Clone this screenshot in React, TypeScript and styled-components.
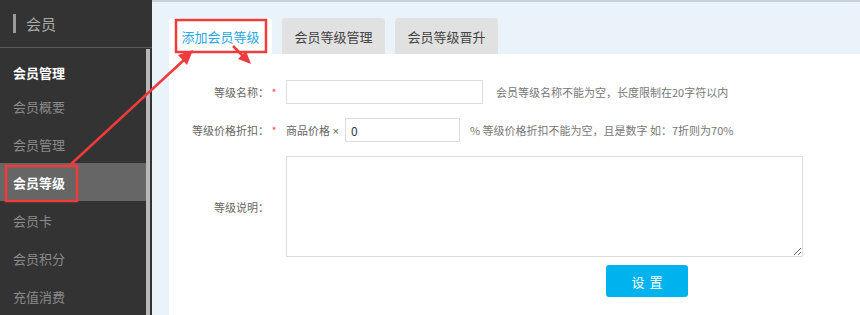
import styled, { createGlobalStyle } from 'styled-components';

const GlobalStyle = createGlobalStyle`
  html, body {
    margin: 0;
    padding: 0;
    background: #eaf3fa;
    font-family: "Noto Sans CJK SC", "Noto Sans", sans-serif;
    overflow: hidden;
  }
  * { box-sizing: border-box; }
`;

const menu = ['会员概要', '会员管理', '会员等级', '会员卡', '会员积分', '充值消费'];
const tabs = ['添加会员等级', '会员等级管理', '会员等级晋升'];

const Annotations = () => (
  <Overlay width="860" height="315" viewBox="0 0 860 315">
    <g stroke="#ef3b3b" strokeWidth="2.5" fill="none">
      <rect x="6" y="166" width="71" height="35" />
      <rect x="176" y="20" width="90" height="32" />
      <line x1="70" y1="165" x2="185" y2="59" strokeWidth="2.5" />
      <line x1="233" y1="46" x2="244" y2="57" strokeWidth="2.5" />
    </g>
    <g fill="#ef3b3b">
      <polygon points="193,50 187,65 178,55" />
      <polygon points="251,64 238,59 246,51" />
    </g>
  </Overlay>
);

const App = () => {
  return (
    <Page>
      <GlobalStyle />
      <Sidebar>
        <SideHeader>
          <span className="bar" />
          会员
        </SideHeader>
        <SideBody>
          <MenuList>
            <MenuTitle>会员管理</MenuTitle>
            {menu.map((item) => (
              <MenuItem key={item} $active={item === '会员等级'}>
                {item}
              </MenuItem>
            ))}
          </MenuList>
          <ScrollTrack />
        </SideBody>
      </Sidebar>

      <Main>
        <Tabs>
          {tabs.map((t, i) => (
            <Tab key={t} $active={i === 0}>
              {t}
            </Tab>
          ))}
        </Tabs>
        <Panel>
          <Row>
            <Label $required>等级名称：</Label>
            <TextInput style={{ width: 197 }} />
            <Hint>会员等级名称不能为空，长度限制在20字符以内</Hint>
          </Row>
          <Row>
            <Label $required>等级价格折扣：</Label>
            <Inline>
              商品价格 <Times>×</Times>
            </Inline>
            <TextInput style={{ width: 115 }} defaultValue="0" />
            <Hint $tight>% 等级价格折扣不能为空，且是数字 如：7折则为70%</Hint>
          </Row>
          <Row>
            <Label>等级说明：</Label>
            <TextArea />
          </Row>
          <Actions>
            <Button>设置</Button>
          </Actions>
        </Panel>
      </Main>

      <Annotations />
    </Page>
  );
};

const Page = styled.div`
  position: relative;
  display: flex;
  width: 860px;
  height: 315px;
  overflow: hidden;
`;

const Overlay = styled.svg`
  position: absolute;
  left: 0;
  top: 0;
  pointer-events: none;
`;

const Sidebar = styled.aside`
  width: 152px;
  flex-shrink: 0;
  background: #333333;
  display: flex;
  flex-direction: column;
`;

const SideHeader = styled.div`
  height: 50px;
  border-bottom: 1px solid #5a5a5a;
  display: flex;
  align-items: center;
  padding-left: 13px;
  color: #a8a8a8;
  font-size: 15px;

  .bar {
    display: inline-block;
    width: 3px;
    height: 19px;
    background: #9a9a9a;
    margin-right: 10px;
  }
`;

const SideBody = styled.div`
  flex: 1;
  display: flex;
`;

const MenuList = styled.ul`
  flex: 1;
  list-style: none;
  margin: 0;
  padding: 0;
`;

const MenuTitle = styled.li`
  height: 39px;
  padding: 10px 0 0 13px;
  display: flex;
  align-items: center;
  color: #ffffff;
  font-size: 13px;
  font-weight: bold;
`;

const MenuItem = styled.li<{ $active?: boolean }>`
  height: 38px;
  display: flex;
  align-items: center;
  padding-left: 13px;
  font-size: 13px;
  color: ${(p) => (p.$active ? '#ffffff' : '#8a8a8a')};
  font-weight: ${(p) => (p.$active ? 'bold' : 'normal')};
  background: ${(p) => (p.$active ? '#666666' : 'transparent')};
`;

const ScrollTrack = styled.div`
  width: 4px;
  margin-right: 2px;
  margin-top: 1px;
  background: #b8b8b8;
`;

const Main = styled.main`
  flex: 1;
  border-top: 2px solid #c9d0d6;
  padding-left: 17px;
  display: flex;
  flex-direction: column;
`;

const Tabs = styled.div`
  display: flex;
  gap: 10px;
  padding-top: 16px;
`;

const Tab = styled.div<{ $active?: boolean }>`
  width: 103px;
  height: 36px;
  border-radius: 4px 4px 0 0;
  display: flex;
  align-items: center;
  justify-content: center;
  font-size: 13px;
  background: ${(p) => (p.$active ? '#ffffff' : '#e1e1e1')};
  color: ${(p) => (p.$active ? '#2aa7e6' : '#444444')};
`;

const Panel = styled.section`
  flex: 1;
  background: #ffffff;
  padding-top: 26px;
  display: flex;
  flex-direction: column;
  gap: 14px;
`;

const Row = styled.div`
  display: flex;
  align-items: center;
`;

const Label = styled.label<{ $required?: boolean }>`
  width: 110px;
  flex-shrink: 0;
  margin-right: 7px;
  text-align: right;
  font-size: 11px;
  color: #666666;

  &::after {
    content: '*';
    display: inline-block;
    width: 10px;
    text-align: center;
    color: #f25555;
    visibility: ${(p) => (p.$required ? 'visible' : 'hidden')};
  }
`;

const TextInput = styled.input`
  height: 24px;
  border: 1px solid #dddddd;
  padding: 0 5px;
  font-size: 12px;
  color: #333333;
  font-family: inherit;
  outline: none;
`;

const Inline = styled.span`
  font-size: 11px;
  color: #666666;
  margin-right: 6px;
  white-space: pre;
`;

const Times = styled.span`
  font-family: "Liberation Sans", sans-serif;
  font-size: 11px;
`;

const Hint = styled.span<{ $tight?: boolean }>`
  margin-left: ${(p) => (p.$tight ? '10px' : '13px')};
  font-size: 11px;
  color: #777777;
`;

const TextArea = styled.textarea`
  width: 517px;
  height: 101px;
  border: 1px solid #dddddd;
  resize: both;
  font-family: inherit;
  outline: none;
`;

const Actions = styled.div`
  margin-top: -6px;
  padding-left: 437px;
`;

const Button = styled.button`
  width: 82px;
  height: 32px;
  border: none;
  border-radius: 3px;
  background: #00b3ef;
  color: #ffffff;
  font-size: 13px;
  letter-spacing: 5px;
  text-indent: 5px;
  font-family: inherit;
`;

export default App;
